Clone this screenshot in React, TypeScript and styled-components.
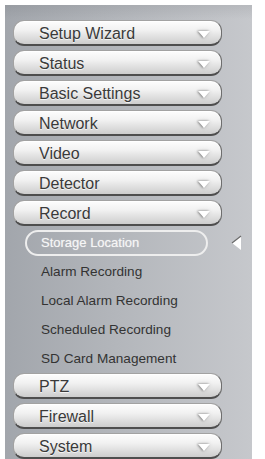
import React from "react"
import styled, { createGlobalStyle } from "styled-components"

const Global = createGlobalStyle`
html, body {
  margin: 0;
  padding: 0;
  background: #ffffff;
  overflow: hidden;
}
body {
  font-family: 'Liberation Sans', Arial, sans-serif;
}
`;

const Page = styled.div`
padding: 5px 0 0 5px;
`;

const Panel = styled.nav`
width: 247px;
min-height: 460px;
box-sizing: border-box;
padding: 15px 0 10px 8px;
background:
  linear-gradient(180deg, rgba(60, 64, 70, 0.10) 0px, rgba(60, 64, 70, 0) 14px),
  linear-gradient(90deg, #a2a6ac 0%, #b3b6bb 45%, #c6c8cc 100%);
display: flex;
flex-direction: column;
`;

const MenuButton = styled.div`
display: flex;
align-items: center;
width: 209px;
height: 26px;
box-sizing: border-box;
margin-bottom: 4px;
padding: 2px 11px 0 25px;
border-radius: 11px;
border: 1px solid #a2a2a2;
border-right-color: #6e6e6e;
border-bottom: 2px solid #4e4e4e;
background: linear-gradient(180deg, #fdfdfd 0%, #f1f1f1 40%, #dcdcdc 75%, #cdcdcd 100%);
box-shadow: inset 0 1px 0 #ffffff;
font-size: 16px;
color: #3a3a3a;
text-shadow: 0 1px 0 rgba(255, 255, 255, 0.7);
cursor: pointer;
`;

const Label = styled.span`
flex: 1;
white-space: nowrap;
`;

const Caret = styled.span`
width: 0;
height: 0;
margin-top: 1px;
border-left: 6px solid transparent;
border-right: 6px solid transparent;
border-top: 7px solid #ffffff;
filter: drop-shadow(-1px 0 1px rgba(0, 0, 0, 0.45)) drop-shadow(0 0 2px rgba(0, 0, 0, 0.15));
`;

const SubMenu = styled.div`
display: flex;
flex-direction: column;
margin-top: -2px;
`;

const SubRow = styled.div`
display: flex;
align-items: center;
height: 29px;
padding-left: 12px;
`;

const SubItem = styled.div<{ $active?: boolean }>`
display: flex;
align-items: center;
width: 183px;
height: 26px;
box-sizing: border-box;
padding-left: 14px;
border-radius: 13px;
border: 2px solid ${(p) => (p.$active ? "#eeeeee" : "transparent")};
font-size: ${(p) => (p.$active ? "13px" : "13.6px")};
color: ${(p) => (p.$active ? "#f6f6f6" : "#333333")};
text-shadow: ${(p) => (p.$active ? "0 0 1px rgba(255,255,255,0.5)" : "none")};
white-space: nowrap;
cursor: pointer;
`;

const Pointer = styled.svg`
margin-left: 23px;
flex: none;
`;

type Item = { label: string; children?: string[] };

const items: Item[] = [
  { label: "Setup Wizard" },
  { label: "Status" },
  { label: "Basic Settings" },
  { label: "Network" },
  { label: "Video" },
  { label: "Detector" },
  {
    label: "Record",
    children: [
      "Storage Location",
      "Alarm Recording",
      "Local Alarm Recording",
      "Scheduled Recording",
      "SD Card Management",
    ],
  },
  { label: "PTZ" },
  { label: "Firewall" },
  { label: "System" },
];

const active = "Storage Location";

export default function App() {
  return (
    <Page>
      <Global />
      <Panel>
        {items.map((item) => (
          <React.Fragment key={item.label}>
            <MenuButton>
              <Label>{item.label}</Label>
              <Caret />
            </MenuButton>
            {item.children && (
              <SubMenu>
                {item.children.map((c) => (
                  <SubRow key={c}>
                    <SubItem $active={c === active}>{c}</SubItem>
                    {c === active && (
                      <Pointer width="12" height="18" viewBox="0 0 12 18">
                        <polygon points="1,9 10,2 10,16" fill="#ffffff" />
                        <polyline points="10,2 1,9" fill="none" stroke="#6a6a6a" strokeWidth="1.2" />
                      </Pointer>
                    )}
                  </SubRow>
                ))}
              </SubMenu>
            )}
          </React.Fragment>
        ))}
      </Panel>
    </Page>
  )
}
